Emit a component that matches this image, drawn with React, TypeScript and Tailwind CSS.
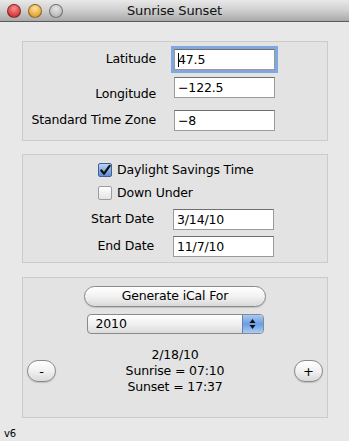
import React from "react";

const font = { fontFamily: '"Lucida Grande", "DejaVu Sans", sans-serif', letterSpacing: "-0.15px" };

function Light({ from, to }: { from: string; to: string }) {
  return (
    <div
      className="h-[14px] w-[14px] rounded-full border border-black/40"
      style={{ background: `radial-gradient(circle at 50% 30%, ${from}, ${to})` }}
    />
  );
}

function Field({ value, focused }: { value: string; focused?: boolean }) {
  return (
    <div
      className={
        "h-[21px] w-[101px] bg-white border border-[#9a9a9a] border-t-[#6f6f6f] px-[3px] text-[12.5px] leading-[19px] text-black " +
        (focused ? "outline outline-[3px] outline-[#7fa7e0] outline-offset-0" : "")
      }
    >
      {focused && <span className="inline-block w-px h-[14px] bg-black align-middle -mr-px" />}
      {value}
    </div>
  );
}

function Check({ checked, label }: { checked?: boolean; label: string }) {
  return (
    <div className="flex items-center gap-[5px] h-[16px]">
      <div
        className={
          "h-[14px] w-[14px] rounded-[2px] border flex items-center justify-center " +
          (checked
            ? "border-[#3f5f9a] bg-gradient-to-b from-[#b9d3f3] to-[#5f8ed6]"
            : "border-[#9d9d9d] bg-gradient-to-b from-white to-[#e4e4e4]")
        }
      >
        {checked && (
          <svg width="13" height="13" viewBox="0 0 13 13">
            <path d="M2.5 6.5 L5.5 10 L11.5 1.5" stroke="#111" strokeWidth="2.4" fill="none" strokeLinecap="round" strokeLinejoin="round" />
          </svg>
        )}
      </div>
      <span className="text-[12.5px] leading-[16px] text-black">{label}</span>
    </div>
  );
}

function Round({ sign }: { sign: string }) {
  return (
    <div className="h-[22px] w-[29px] rounded-full border border-[#8a8a8a] bg-gradient-to-b from-white via-[#f1f1f1] to-[#dadada] flex items-center justify-center text-[13px] leading-none text-black shadow-[0_1px_1px_rgba(0,0,0,0.15)]">
      {sign}
    </div>
  );
}

export default function App() {
  return (
    <div className="w-[349px] h-[441px] bg-[#e8e8e8] flex flex-col overflow-hidden" style={font}>
      <div className="relative h-[22px] shrink-0 bg-gradient-to-b from-[#e9e9e9] via-[#cfcfcf] to-[#a9a9a9] border-b border-[#5a5a5a] flex items-center">
        <div className="flex gap-[7px] pl-[7px]">
          <Light from="#ff8c8c" to="#c21b1b" />
          <Light from="#ffe39a" to="#d98a10" />
          <Light from="#e6e6e6" to="#a9a9a9" />
        </div>
        <div className="absolute inset-0 flex items-center justify-center text-[13px] text-[#111]">Sunrise Sunset</div>
      </div>

      <div className="flex-1 px-[22px] pr-[21px] flex flex-col">
        <div className="mt-[19px] h-[100px] border border-[#cbcbcb] bg-[#e3e3e3] flex flex-col text-[12.5px]">
          <div className="mt-[6px] flex items-center h-[22px]">
            <div className="w-[133px] text-right text-black">Latitude</div>
            <div className="ml-[18px]"><Field value="47.5" focused /></div>
          </div>
          <div className="mt-[7px] flex items-start h-[21px]">
            <div className="w-[133px] text-right text-black mt-[8px]">Longitude</div>
            <div className="ml-[18px]"><Field value="−122.5" /></div>
          </div>
          <div className="mt-[12px] flex items-center h-[21px]">
            <div className="w-[133px] text-right text-black">Standard Time Zone</div>
            <div className="ml-[18px]"><Field value="−8" /></div>
          </div>
        </div>

        <div className="mt-[13px] h-[109px] border border-[#cbcbcb] bg-[#e3e3e3] flex flex-col text-[12.5px]">
          <div className="mt-[7px] pl-[75px]"><Check checked label="Daylight Savings Time" /></div>
          <div className="mt-[7px] pl-[75px]"><Check label="Down Under" /></div>
          <div className="mt-[8px] flex items-center h-[21px]">
            <div className="w-[131px] text-right text-black">Start Date</div>
            <div className="ml-[19px]"><Field value="3/14/10" /></div>
          </div>
          <div className="mt-[6px] flex items-center h-[21px]">
            <div className="w-[131px] text-right text-black">End Date</div>
            <div className="ml-[19px]"><Field value="11/7/10" /></div>
          </div>
        </div>

        <div className="mt-[14px] h-[141px] border border-[#cbcbcb] bg-[#e3e3e3] flex flex-col items-center text-[12.5px]">
          <div className="mt-[8px] h-[21px] w-[182px] rounded-full border border-[#8a8a8a] bg-gradient-to-b from-white via-[#f2f2f2] to-[#d9d9d9] flex items-center justify-center text-black shadow-[0_1px_1px_rgba(0,0,0,0.15)]">
            Generate iCal For
          </div>
          <div className="mt-[7px] h-[20px] w-[177px] rounded-[4px] border border-[#8a8a8a] bg-gradient-to-b from-white via-[#f0f0f0] to-[#dcdcdc] flex items-center overflow-hidden">
            <span className="flex-1 pl-[8px] text-black">2010</span>
            <div className="h-full w-[21px] bg-gradient-to-b from-[#a9c9f2] via-[#6a9de3] to-[#a9cdf5] border-l border-[#6a7fa6] flex items-center justify-center">
              <svg width="7" height="12" viewBox="0 0 7 12">
                <path d="M3.5 1 L6.5 5 H0.5 Z M3.5 11 L6.5 7 H0.5 Z" fill="#111" />
              </svg>
            </div>
          </div>
          <div className="mt-[13px] w-full flex items-center justify-between px-[4px]">
            <Round sign="-" />
            <div className="flex flex-col items-center leading-[16px] text-black">
              <span>2/18/10</span>
              <span>Sunrise = 07:10</span>
              <span>Sunset = 17:37</span>
            </div>
            <Round sign="+" />
          </div>
        </div>

        <div className="mt-[8px] -ml-[18px] text-[10px] text-black">v6</div>
      </div>
    </div>
  );
}
